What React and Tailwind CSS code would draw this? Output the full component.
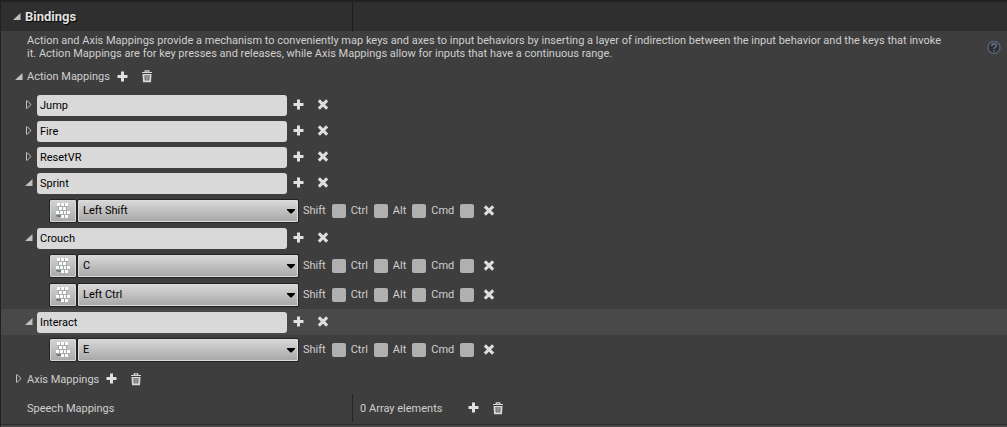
import React, { useState } from "react";

const PlusIcon = () => (
  <svg width="12" height="12" viewBox="0 0 12 12" aria-hidden="true">
    <path d="M4 .5h3v3.500h3.500v3H7v3.500H4V7H.5V4H4z" fill="#e0e0e0" />
  </svg>
);

const CrossIcon = () => (
  <svg width="12" height="12" viewBox="0 0 12 12" aria-hidden="true">
    <path d="M2.900 2.400l6.200 6.200M9.100 2.400L2.900 8.600" stroke="#dedede" strokeWidth="3" strokeLinecap="square" />
  </svg>
);

const TrashIcon = () => (
  <svg width="12" height="13" viewBox="0 0 12 13" aria-hidden="true">
    <path d="M1 2.500h10M4.200 2V.8h3.600V2" stroke="#d8d8d8" strokeWidth="1.200" fill="none" />
    <path d="M1.500 4h9l-.5 8.200H2z" fill="#d8d8d8" />
    <path d="M4 5l.3 5.500M6 5v5.500M8 5l-.3 5.500" stroke="#3e3e3e" strokeWidth=".9" />
  </svg>
);

const KeyboardIcon = () => (
  <svg width="16" height="16" viewBox="0 0 16 16" aria-hidden="true">
    <path d="M2 1h11v3H2zM3 4h9v4H3zM1 8h14v4H1zM6 12h7v3H6z" fill="#a3abae" />
    <path d="M1 12h5v2H2z" fill="#74797c" />
    <g fill="#fcfcfc">
      <path d="M2 0h3v3H2zM6 0h3v3H6zM10 0h3v3h-3z" />
      <path d="M4 4h3v3H4zM8 4h3v3H8z" />
      <path d="M1 8h3v3H1zM5 8h3v3H5zM9 8h2v3H9zM12 8h3v3h-3z" />
      <path d="M6 12h3v3H6zM10 12h3v3h-3z" />
    </g>
  </svg>
);

const Expander = ({ open, label, onClick }) => (
  <button type="button" aria-label={label} aria-expanded={open} onClick={onClick} className="flex h-5 w-4 shrink-0 items-center justify-center">
    {open ? (
      <svg width="8" height="10" viewBox="0 0 8 10" aria-hidden="true">
        <path d="M7.500 1v7H0z" fill="#c0c0c0" />
      </svg>
    ) : (
      <svg width="8" height="10" viewBox="0 0 8 10" aria-hidden="true">
        <path d="M1.500 .8v7.400h.8L6 4.500 2.300 .8z" fill="none" stroke="#c4c4c4" strokeWidth="1" />
      </svg>
    )}
  </button>
);

const IconButton = ({ label, children }) => (
  <button type="button" aria-label={label} className="flex h-5 w-6 shrink-0 items-center justify-center">
    {children}
  </button>
);

const KeyRow = ({ id, value }) => (
  <div className="flex h-[29px] items-center pl-12">
    <button
      type="button"
      aria-label={`Listen for key, ${value}`}
      className="flex h-6 w-7 shrink-0 items-center justify-center rounded-xs border border-[#222] bg-linear-to-b from-[#d4d4d4] to-[#a9a9a9] shadow-[inset_0_0_0_1px_#d6d6d6]"
    >
      <KeyboardIcon />
    </button>
    <div className="relative w-[222px] shrink-0">
      <select
        aria-label="Key"
        defaultValue={value}
        className="block h-6 w-full appearance-none rounded-xs border border-[#222] bg-linear-to-b from-[#dadada] to-[#a6a6a6] pl-[5px] text-black shadow-[inset_0_0_0_1px_#dcdcdc] outline-none"
      >
        <option>{value}</option>
      </select>
      <svg className="pointer-events-none absolute top-[10px] right-[4px]" width="8" height="5" viewBox="0 0 8 5" aria-hidden="true">
        <path d="M0 0h8v1L4.5 4.5h-1L0 1z" fill="#000" />
      </svg>
    </div>
    <div className="flex items-center gap-[5px] pl-1">
      {["Shift", "Ctrl", "Alt", "Cmd"].map((mod) => (
        <div key={mod} className="flex items-center gap-1.5">
          <label htmlFor={`${id}-${mod}`}>{mod}</label>
          <input
            id={`${id}-${mod}`}
            type="checkbox"
            className="size-[14px] appearance-none rounded-xs bg-[#b0b0b0] checked:bg-[#e08a20]"
          />
        </div>
      ))}
    </div>
    <div className="flex pl-[3px]">
      <IconButton label="Remove key"><CrossIcon /></IconButton>
    </div>
  </div>
);

const Mapping = ({ name, keys, initiallyOpen = false, highlighted = false }) => {
  const [open, setOpen] = useState(initiallyOpen);
  return (
    <>
      <div className={`flex h-[26px] items-center pl-5 ${highlighted ? "bg-[#494949]" : ""}`}>
        <Expander open={open} label={`Toggle ${name}`} onClick={() => setOpen(!open)} />
        <input
          type="text"
          aria-label="Action name"
          defaultValue={name}
          className="h-[21px] w-[250px] shrink-0 rounded-[3px] bg-[#d9d9d9] px-[3px] text-black outline-none"
        />
        <IconButton label="Add key"><PlusIcon /></IconButton>
        <IconButton label="Remove mapping"><CrossIcon /></IconButton>
      </div>
      {open && keys.map((k) => <KeyRow key={k} id={`${name}-${k}`.replace(/ /g, "")} value={k} />)}
    </>
  );
};

const mappings = [
  { name: "Jump", keys: [] },
  { name: "Fire", keys: [] },
  { name: "ResetVR", keys: [] },
  { name: "Sprint", keys: ["Left Shift"], initiallyOpen: true },
  { name: "Crouch", keys: ["C", "Left Ctrl"], initiallyOpen: true },
  { name: "Interact", keys: ["E"], initiallyOpen: true, highlighted: true },
];

export default function App() {
  return (
    <div className="min-h-screen border-t-2 border-l border-[#212121] bg-[#3e3e3e] font-[Roboto,'Liberation_Sans',sans-serif] text-[11px] leading-[13px] text-[#cfcfcf]">
      <header className="flex h-[29px] bg-[#2f2f2f]">
        <div className="flex w-[35%] items-center border-r border-[#1c1c1c] pl-2">
          <Expander open label="Toggle Bindings" />
          <h1 className="text-[13px] font-bold text-[#e2e2e2] [text-shadow:1px_1px_1px_#000]">Bindings</h1>
        </div>
      </header>

      <div className="flex h-8 items-center justify-between pr-[6px] pl-[26px]">
        <p>
          Action and Axis Mappings provide a mechanism to conveniently map keys and axes to input behaviors by inserting a layer of indirection between the input behavior and the keys that invoke
          <br />
          it. Action Mappings are for key presses and releases, while Axis Mappings allow for inputs that have a continuous range.
        </p>
        <button type="button" aria-label="Help" className="shrink-0">
          <svg width="14" height="15" viewBox="0 0 14 15" aria-hidden="true">
            <circle cx="7" cy="7.500" r="6.100" fill="#2c2f36" stroke="#566074" strokeWidth="1.500" />
            <path d="M4.800 6c0-1.500 1-2.200 2.200-2.200S9.300 4.500 9.300 5.700C9.300 7.200 7 7.300 7 9M7 10.300v1.500" fill="none" stroke="#6d7482" strokeWidth="1.500" />
          </svg>
        </button>
      </div>

      <div className="flex h-[29px] items-center pb-0.5 pl-[10px]">
        <Expander open label="Toggle Action Mappings" />
        <h2 className="pr-px">Action Mappings</h2>
        <IconButton label="Add action mapping"><PlusIcon /></IconButton>
        <IconButton label="Remove all action mappings"><TrashIcon /></IconButton>
      </div>

      {mappings.map((m) => (
        <Mapping key={m.name} {...m} />
      ))}

      <div className="flex h-[30px] items-center pl-[10px]">
        <Expander open={false} label="Toggle Axis Mappings" />
        <h2 className="pr-px">Axis Mappings</h2>
        <IconButton label="Add axis mapping"><PlusIcon /></IconButton>
        <IconButton label="Remove all axis mappings"><TrashIcon /></IconButton>
      </div>

      <div className="flex h-7">
        <h2 className="flex w-[35%] items-center border-r border-[#262626] pl-[26px]">Speech Mappings</h2>
        <div className="flex items-center pl-[7px]">
          <span className="pr-5">0 Array elements</span>
          <IconButton label="Add speech mapping"><PlusIcon /></IconButton>
          <IconButton label="Remove all speech mappings"><TrashIcon /></IconButton>
        </div>
      </div>
      <div className="mt-0.5 h-[3px] border-t border-[#2b2b2b] bg-[#474747]" />
    </div>
  );
}
